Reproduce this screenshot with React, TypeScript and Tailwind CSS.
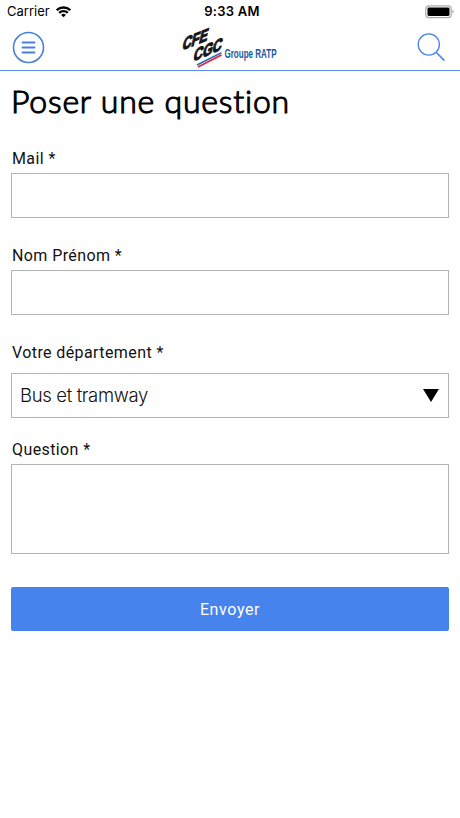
import type { ReactNode } from "react";

function StatusBar() {
  return (
    <div className="flex h-6 items-center justify-between pr-[5px] pl-[7px] text-black">
      <div className="flex w-[140px] items-center gap-[6px]">
        <span className="font-['Inter','Liberation_Sans',sans-serif] text-[13px]">Carrier</span>
        <svg width="15" height="12" viewBox="0 0 15 12" fill="none" stroke="#000" strokeWidth="2.3">
          <path d="M.7 4.3a9.6 9.6 0 0 1 13.6 0" />
          <path d="M3.2 6.9a6.1 6.1 0 0 1 8.6 0" />
          <path d="M7.5 11.2 5.1 8.9a3.4 3.4 0 0 1 4.8 0z" fill="#000" stroke="none" />
        </svg>
      </div>
      <span className="pl-[2px] font-['Inter','Liberation_Sans',sans-serif] text-[13px] font-semibold tracking-[0.25px]">9:33 AM</span>
      <div className="flex w-[140px] justify-end">
        <svg width="30" height="14" viewBox="0 0 30 14">
          <rect x=".8" y=".8" width="25.4" height="11.8" rx="3" fill="none" stroke="#aaa" strokeWidth="1.2" />
          <rect x="2.5" y="2.5" width="22" height="8.4" rx="1.3" />
          <path d="M27.5 4.8c1.5.5 1.5 3.3 0 3.8z" fill="#999" />
        </svg>
      </div>
    </div>
  );
}

function Logo() {
  return (
    <svg width="98" height="44" viewBox="0 0 98 44" className="overflow-visible font-['Liberation_Sans',sans-serif]">
      <g fontWeight="700" fontSize="18" fill="#171719" stroke="#171719" strokeWidth="1.3">
        <text transform="matrix(1 -.4 -.22 1 1.8 24.3)" textLength="25" lengthAdjust="spacingAndGlyphs">CFE</text>
        <text transform="matrix(1 -.42 -.22 1 12.8 35.5)" textLength="28" lengthAdjust="spacingAndGlyphs">CGC</text>
      </g>
      <path d="M17 39 41.5 26.6" stroke="#2869ae" strokeWidth="1.6" />
      <path d="M18 41 41.5 28.9" stroke="#dc3040" strokeWidth="1.8" />
      <text
        x="44.5"
        y="32"
        fontSize="12.5"
        fontWeight="700"
        fill="#1a56a0"
        textLength="52"
        lengthAdjust="spacingAndGlyphs"
      >
        Groupe RATP
      </text>
    </svg>
  );
}

function NavBar() {
  return (
    <header className="flex h-[47px] items-start justify-between border-b border-[#5c91ee] pr-[14px] pl-3">
      <button className="mt-[7px] w-[98px]" aria-label="Menu">
        <svg width="33" height="33" viewBox="0 0 33 33" fill="none" stroke="#4681e0">
          <circle cx="16.5" cy="16.5" r="15" strokeWidth="1.6" />
          <path d="M10.5 11.5h12M10.5 16.5h12M10.5 21.5h12" strokeWidth="1.8" strokeLinecap="round" />
        </svg>
      </button>
      <div className="mt-[2px]">
        <Logo />
      </div>
      <button className="mt-[8px] flex w-[98px] justify-end" aria-label="Rechercher">
        <svg width="29" height="31" viewBox="0 0 29 31" fill="none" stroke="#4a85e6" strokeWidth="1.3">
          <circle cx="11.8" cy="12.5" r="10.6" />
          <path d="m19.2 20.2 8.2 8.4" strokeWidth="1.6" />
        </svg>
      </button>
    </header>
  );
}

function Label({ children }: { children: ReactNode }) {
  return (
    <span className="block h-5 w-max pt-px pl-px font-['Roboto','Liberation_Sans',sans-serif] text-base leading-5 tracking-[0.4px] text-[#111]">
      {children}
    </span>
  );
}

export default function App() {
  return (
    <div className="h-[818px] w-full overflow-hidden bg-white">
      <StatusBar />
      <NavBar />
      <main className="px-[11px]">
        <h1 className="h-[77px] pt-[10px] font-['Lato',sans-serif] text-[32px] leading-10 font-light tracking-[0.8px] whitespace-nowrap text-black [-webkit-text-stroke:1.1px_black]">
          Poser une question
        </h1>
        <form className="flex flex-col">
          <label className="mb-[27px]">
            <Label>Mail *</Label>
            <input className="mt-[5px] block h-[45px] w-full border border-[#b4b4b4] px-2 outline-none" />
          </label>
          <label className="mb-[27px]">
            <Label>Nom Prénom *</Label>
            <input className="mt-[5px] block h-[45px] w-full border border-[#b4b4b4] px-2 outline-none" />
          </label>
          <div className="mb-[21px]">
            <Label>Votre département *</Label>
            <div className="mt-[11px] flex h-[45px] items-center justify-between border border-[#b4b4b4] pr-[9px] pl-2">
              <span className="font-['Inter','Liberation_Sans',sans-serif] text-[18.5px] font-light tracking-[-0.35px] text-[#111]">
                Bus et tramway
              </span>
              <svg width="16" height="13" viewBox="0 0 16 13">
                <path d="M0 0h16L8 13z" />
              </svg>
            </div>
          </div>
          <label>
            <Label>Question *</Label>
            <textarea className="mt-[5px] block h-[90px] w-full resize-none border border-[#b4b4b4] px-2 outline-none" />
          </label>
          <button
            type="button"
            className="mt-[33px] h-[44px] rounded-[2px] bg-[#4783ec] pt-px font-['Roboto','Liberation_Sans',sans-serif] text-base tracking-[0.6px] text-white"
          >
            Envoyer
          </button>
        </form>
      </main>
    </div>
  );
}
